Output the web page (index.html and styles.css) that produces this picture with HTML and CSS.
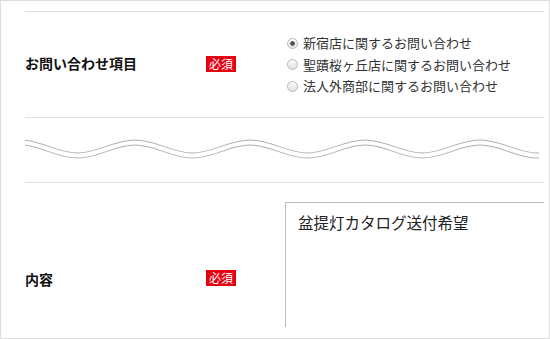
FILE: index.html
```html
<!DOCTYPE html>
<html lang="ja">
<head>
  <meta charset="UTF-8">
  <meta name="viewport" content="width=device-width, initial-scale=1.0">
  <title>お問い合わせ</title>
  <link rel="stylesheet" href="styles.css">
</head>
<body>

<div class="frame">
  <div class="viewport">
    <form class="contact-form">
      <div class="form-row">
        <div class="form-label">お問い合わせ項目</div>
        <div class="form-req"><span class="badge">必須</span></div>
        <div class="form-field">
          <label class="option"><input type="radio" name="topic" checked>新宿店に関するお問い合わせ</label>
          <label class="option"><input type="radio" name="topic">聖蹟桜ヶ丘店に関するお問い合わせ</label>
          <label class="option"><input type="radio" name="topic">法人外商部に関するお問い合わせ</label>
        </div>
      </div>

      <div class="wave-row">
        <svg class="wave" width="514" height="30" viewBox="0 0 514 30">
          <path class="wave-outer" d="M-5 8.5 C16 8.5 31.5 21.5 52.5 21.5 S89 8.5 110 8.5 S146.5 21.5 167.5 21.5 S204 8.5 225 8.5 S261.5 21.5 282.5 21.5 S319 8.5 340 8.5 S376.5 21.5 397.5 21.5 S434 8.5 455 8.5 S491.5 21.5 512.5 21.5 L514 21.5"/>
          <path class="wave-inner" d="M-5 8.5 C16 8.5 31.5 21.5 52.5 21.5 S89 8.5 110 8.5 S146.5 21.5 167.5 21.5 S204 8.5 225 8.5 S261.5 21.5 282.5 21.5 S319 8.5 340 8.5 S376.5 21.5 397.5 21.5 S434 8.5 455 8.5 S491.5 21.5 512.5 21.5 L514 21.5"/>
        </svg>
      </div>

      <div class="form-row form-row-text">
        <div class="form-label">内容</div>
        <div class="form-req"><span class="badge">必須</span></div>
        <div class="form-field">
          <textarea class="message" name="message">盆提灯カタログ送付希望</textarea>
        </div>
      </div>
    </form>
  </div>
</div>

</body>
</html>
```

FILE: styles.css
```css
body {
  margin: 0;
  font-family: "Noto Sans CJK JP", "Noto Sans", sans-serif;
  background-color: #fff;
}
.frame {
  width: 550px;
  height: 339px;
  box-sizing: border-box;
  border: 1px solid #ddd;
  padding: 0 5px 11px 24px;
}
.viewport {
  height: 100%;
  overflow: hidden;
}
.contact-form {
  padding-top: 10px;
}
.form-row {
  display: grid;
  grid-template-columns: 181px 79px 1fr;
  align-items: center;
  border-top: 1px solid #e0e0e0;
  height: 105px;
}
.form-label {
  font-size: 14px;
  font-weight: bold;
  color: #111;
  margin-bottom: 4px;
}
.badge {
  display: inline-block;
  background-color: #e60012;
  color: #fff;
  font-size: 12px;
  line-height: 16px;
  padding: 0 3px;
  margin-bottom: 8px;
}
.form-field {
  min-width: 0;
}
.option {
  display: flex;
  align-items: center;
  font-size: 13px;
  line-height: 21.5px;
  color: #333;
}
.option input {
  appearance: none;
  width: 11px;
  height: 11px;
  margin: 0 5px 0 2px;
  border: 1px solid #b8b8b8;
  border-radius: 50%;
  background: linear-gradient(#fbfbfb, #e2e2e2);
}
.option input:checked {
  background: radial-gradient(circle, #555 0 2px, transparent 2.6px), linear-gradient(#fbfbfb, #e2e2e2);
}
.wave-row {
  border-top: 1px solid #e0e0e0;
  height: 65px;
  box-sizing: border-box;
  padding-top: 16px;
}
.wave {
  display: block;
}
.wave path {
  fill: none;
}
.wave-outer {
  stroke: #b0b0b0;
  stroke-width: 6;
}
.wave-inner {
  stroke: #fff;
  stroke-width: 4;
}
.form-row-text {
  height: auto;
  padding: 19px 0;
}
.form-row-text .form-label {
  margin-bottom: 0;
}
.message {
  display: block;
  width: calc(100% + 20px);
  height: 153px;
  box-sizing: border-box;
  border: 1px solid #bbb;
  padding: 8px 12px;
  font-family: inherit;
  font-size: 15.5px;
  line-height: 1.5;
  color: #222;
  resize: none;
  outline: none;
}
```
